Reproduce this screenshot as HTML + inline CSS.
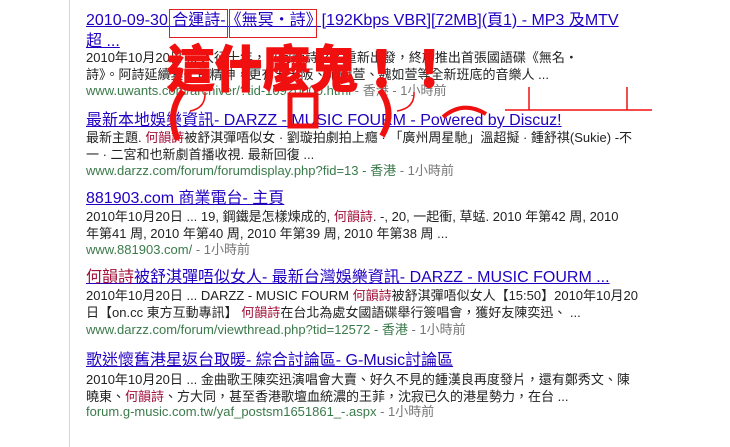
<!DOCTYPE html>
<html><head><meta charset="utf-8"><style>
body{margin:0;width:730px;height:447px;background:#fff;position:relative;overflow:hidden;font-family:"Liberation Sans","Noto Sans CJK TC",sans-serif;}
.bar{position:absolute;left:69px;top:0;width:1px;height:447px;background:#c9d7e6;}
.l{position:absolute;left:86px;white-space:nowrap;font-size:13px;color:#222;line-height:17px;}
.t{font-size:16px;color:#2200c1;text-decoration:underline;line-height:19px;}
.u{color:#3a7a4a;}
.g{color:#777;}
.r{color:#a0103a;}
svg{position:absolute;left:0;top:0;}
</style></head><body>
<div class="bar"></div>
<div class="l t" style="top:11px">2010-09-30 合運詩-《無冥・詩》[192Kbps VBR][72MB](頁1) - MP3 及MTV</div>
<div class="l t" style="top:32px">超 ...</div>
<div class="l" style="top:49px">2010年10月20日 ... 入行十年，以何韻詩之名重新出發，終於推出首張國語碟《無名・</div>
<div class="l" style="top:66px">詩》。阿詩延續其一貫精神，更有五天阪、范曉萱、魏如萱等全新班底的音樂人 ...</div>
<div class="l u" style="top:82px">www.uwants.com/archiver/?tid-10920000.html <span class="g">- 香港 - 1小時前</span></div>
<div class="l t" style="top:111px">最新本地娛樂資訊- DARZZ - MUSIC FOURM - Powered by Discuz!</div>
<div class="l" style="top:129px">最新主題. <span class="r">何韻詩</span>被舒淇彈唔似女 · 劉璇拍劇拍上癮 · 「廣州周星馳」溫超擬 · 鍾舒祺(Sukie) -不</div>
<div class="l" style="top:146px">一 · 二宮和也新劇首播收視. 最新回復 ...</div>
<div class="l u" style="top:162px">www.darzz.com/forum/forumdisplay.php?fid=13 - 香港 <span class="g">- 1小時前</span></div>
<div class="l t" style="top:189px">881903.com 商業電台- 主頁</div>
<div class="l" style="top:208px">2010年10月20日 ... 19, 鋼鐵是怎樣煉成的, <span class="r">何韻詩</span>. -, 20, 一起衝, 草蜢. 2010 年第42 周, 2010</div>
<div class="l" style="top:225px">年第41 周, 2010 年第40 周, 2010 年第39 周, 2010 年第38 周 ...</div>
<div class="l u" style="top:241px">www.881903.com/ <span class="g">- 1小時前</span></div>
<div class="l t" style="top:268px"><span class="r">何韻詩</span>被舒淇彈唔似女人- 最新台灣娛樂資訊- DARZZ - MUSIC FOURM ...</div>
<div class="l" style="top:287px">2010年10月20日 ... DARZZ - MUSIC FOURM <span class="r">何韻詩</span>被舒淇彈唔似女人【15:50】2010年10月20</div>
<div class="l" style="top:304px">日【on.cc 東方互動專訊】 <span class="r">何韻詩</span>在台北為處女國語碟舉行簽唱會，獲好友陳奕迅、 ...</div>
<div class="l u" style="top:321px">www.darzz.com/forum/viewthread.php?tid=12572 - 香港 <span class="g">- 1小時前</span></div>
<div class="l t" style="top:351px">歌迷懷舊港星返台取暖- 綜合討論區- G-Music討論區</div>
<div class="l" style="top:371px">2010年10月20日 ... 金曲歌王陳奕迅演唱會大賣、好久不見的鍾漢良再度發片，還有鄭秀文、陳</div>
<div class="l" style="top:388px">曉東、<span class="r">何韻詩</span>、方大同，甚至香港歌壇血統濃的王菲，沈寂已久的港星勢力，在台 ...</div>
<div class="l u" style="top:403px">forum.g-music.com.tw/yaf_postsm1651861_-.aspx <span class="g">- 1小時前</span></div>
<svg width="730" height="447" viewBox="0 0 730 447">
<rect x="169.5" y="9.5" width="58" height="28" fill="none" stroke="#e02020" stroke-width="1"/>
<rect x="229.5" y="9.5" width="87" height="28" fill="none" stroke="#e02020" stroke-width="1"/>
<text x="167" y="87" font-size="50" font-weight="900" fill="#f01010" stroke="#f01010" stroke-width="1" stroke-linejoin="round" textLength="286" lengthAdjust="spacingAndGlyphs" font-family="'Noto Sans CJK TC',sans-serif">這什麼鬼！！</text>
<path d="M183 91 Q166 114 178 140" fill="none" stroke="#f01010" stroke-width="6"/>
<rect x="290" y="95" width="26" height="31" fill="none" stroke="#f01010" stroke-width="5"/>
<path d="M380 90 Q396 112 382 136" fill="none" stroke="#f01010" stroke-width="6"/>
<path d="M205 92 Q206 108 190 111" fill="none" stroke="#f01010" stroke-width="1.5"/>
<path d="M414 92 Q415 108 397 111" fill="none" stroke="#f01010" stroke-width="1.5"/>
<path d="M443 117 Q463 100 486 114" fill="none" stroke="#f01010" stroke-width="4"/>
<path d="M505 110 H652 M529 87 V110 M627 87 V110" fill="none" stroke="#f01010" stroke-width="1.5"/>
</svg>
</body></html>
